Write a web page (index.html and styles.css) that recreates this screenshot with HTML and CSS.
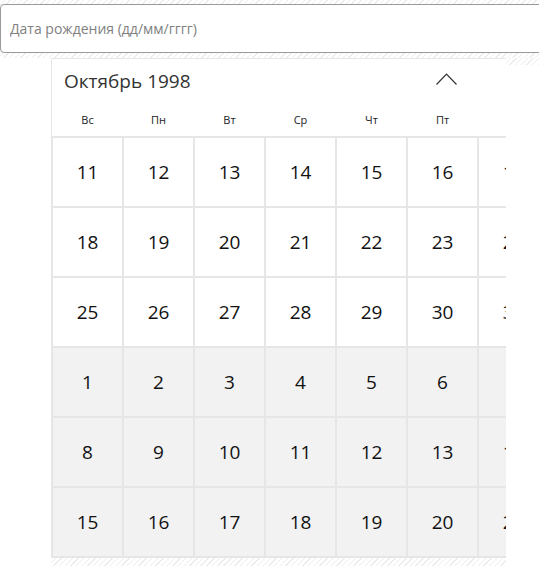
FILE: index.html
```html
<!DOCTYPE html>
<html lang="ru">
<head>
    <meta charset="UTF-8">
    <meta name="viewport" content="width=device-width, initial-scale=1.0">
    <title>Дата рождения</title>
    <link rel="stylesheet" href="styles.css">
</head>
<body>
    <div class="field-band">
        <input type="text" class="date-input" placeholder="Дата рождения (дд/мм/гггг)">
    </div>

    <div class="picker-row">
        <div class="gutter"></div>
        <div class="calendar">
            <div class="calendar-inner">
                <div class="cal-head">
                    <div class="cal-title">Октябрь 1998</div>
                    <button class="nav-btn" aria-label="Предыдущий месяц">
                        <svg width="21" height="12" viewBox="0 0 21 12"><polyline points="0.5,11.5 10.5,1 20.5,11.5" fill="none" stroke="#333" stroke-width="1.2"/></svg>
                    </button>
                    <button class="nav-btn" aria-label="Следующий месяц">
                        <svg width="21" height="12" viewBox="0 0 21 12"><polyline points="0.5,0.5 10.5,11 20.5,0.5" fill="none" stroke="#333" stroke-width="1.2"/></svg>
                    </button>
                </div>
                <div class="weekdays">
                    <span>Вс</span><span>Пн</span><span>Вт</span><span>Ср</span><span>Чт</span><span>Пт</span><span>Сб</span>
                </div>
                <div class="days" id="days"></div>
            </div>
        </div>
        <div class="side">
            <div class="side-hatch"></div>
        </div>
    </div>

    <div class="bottom-band"></div>

    <script>
        // Oct 11 1998 is a Sunday; show six weeks from there
        const days = document.getElementById('days');
        const start = new Date(1998, 9, 11);
        for (let i = 0; i < 42; i++) {
            const d = new Date(start);
            d.setDate(start.getDate() + i);
            const cell = document.createElement('div');
            cell.className = d.getMonth() === 9 ? 'day' : 'day other';
            cell.textContent = d.getDate();
            days.appendChild(cell);
        }
    </script>
</body>
</html>
```

FILE: styles.css
```css
html, body {
    margin: 0;
    padding: 0;
    background: #fff;
    overflow: hidden;
}

body {
    font-family: "Open Sans", "Noto Sans", sans-serif;
    color: #1a1a1a;
}

.hatch,
.field-band,
.side-hatch,
.bottom-band {
    background-image: repeating-linear-gradient(135deg, #fff 0 3px, #ececec 3px 4px);
}

.field-band {
    padding: 4px 0 5px;
    overflow: hidden;
}

.date-input {
    display: block;
    box-sizing: border-box;
    width: 560px;
    height: 49px;
    margin: 0;
    padding: 0 9px;
    border: 1px solid #9a9a9a;
    border-radius: 4px;
    background: #fff;
    font-family: inherit;
    font-size: 14px;
    color: #333;
    outline: none;
}

.date-input::placeholder {
    color: #808080;
}

.picker-row {
    display: flex;
}

.gutter {
    width: 51px;
    flex: none;
}

.calendar {
    width: 455px;
    flex: none;
    overflow: hidden;
    border-top: 1px solid #e6e6e6;
    border-left: 1px solid #e6e6e6;
    box-sizing: border-box;
    background: #fff;
}

.calendar-inner {
    width: 499px;
}

.cal-head {
    display: flex;
    align-items: center;
    height: 44px;
}

.cal-title {
    flex: 1;
    padding-left: 12px;
    font-size: 19px;
    color: #333;
}

.nav-btn {
    width: 70px;
    height: 44px;
    padding: 0;
    border: none;
    background: none;
    display: flex;
    align-items: center;
    justify-content: center;
    cursor: pointer;
}

.nav-btn svg {
    margin-top: -4px;
}

.weekdays {
    display: grid;
    grid-template-columns: repeat(7, 69px);
    column-gap: 2px;
    padding-left: 1px;
    height: 33px;
    align-items: center;
    font-size: 11px;
    color: #222;
    text-align: center;
}

.days {
    display: grid;
    grid-template-columns: repeat(7, 69px);
    grid-auto-rows: 68px;
    gap: 2px;
    padding: 2px 0 2px 1px;
    background: #e6e6e6;
}

.day {
    display: flex;
    align-items: center;
    justify-content: center;
    background: #fff;
    font-size: 19px;
    color: #111;
}

.day.other {
    background: #f2f2f2;
}

.side {
    flex: 1;
}

.side-hatch {
    height: 7px;
}

.bottom-band {
    margin-left: 51px;
    width: 455px;
    height: 10px;
}
```
